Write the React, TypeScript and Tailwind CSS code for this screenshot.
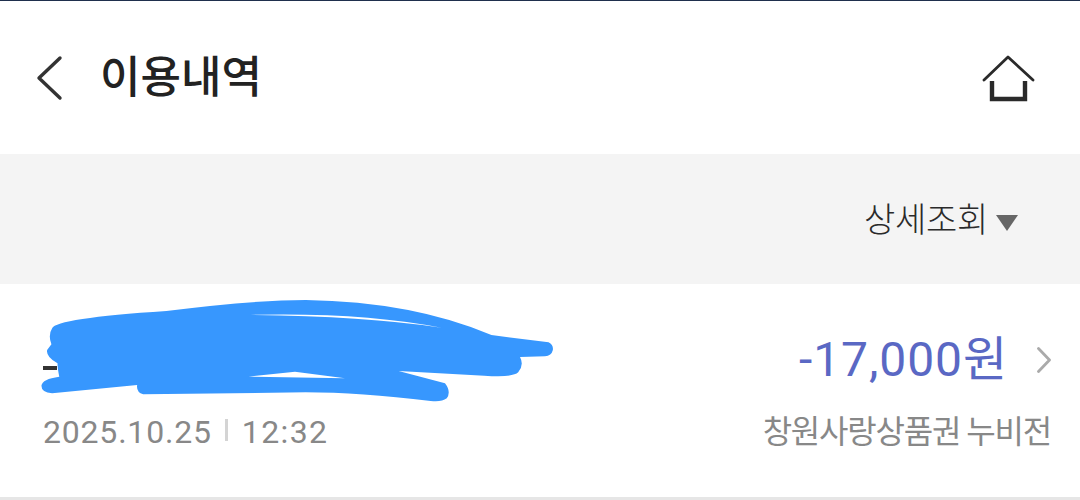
export default function App() {
  const kr = "font-['Noto_Sans_CJK_KR',sans-serif]";
  return (
    <div className={`w-[1080px] h-[500px] overflow-hidden bg-white flex flex-col ${kr}`}>
      <div className="h-px shrink-0 bg-[#1f2f4d]" />
      <header className="h-[153px] shrink-0 flex items-center justify-between pl-[36px] pr-[45px]">
        <div className="flex items-center gap-[36px]">
          <svg width="28" height="46" viewBox="0 0 28 46" fill="none" stroke="#333" strokeWidth="3.4" strokeLinecap="round" strokeLinejoin="round">
            <path d="M24 3 L3 23 L24 43" />
          </svg>
          <h1 className="text-[44px] leading-none font-medium text-[#222] mb-[7px]">이용내역</h1>
        </div>
        <svg width="54" height="48" viewBox="0 0 54 48" fill="none" stroke="#2a2a2a" strokeLinecap="round">
          <path d="M3 26 L27 3 L52 26" strokeWidth="2.8" strokeLinejoin="round" />
          <path d="M11 27 V45 H44 V27" strokeWidth="4.4" strokeLinecap="butt" />
        </svg>
      </header>
      <div className="h-[130px] shrink-0 bg-[#f4f4f4] flex items-center justify-end pr-[62px] gap-[8px]">
        <span className="text-[34px] leading-none text-[#2a2a2a] tracking-[-0.3px] font-light mb-[2px]">상세조회</span>
        <svg width="22" height="16" viewBox="0 0 22 16" className="mt-[8px]">
          <path d="M0 0 H22 L11 16 Z" fill="#666" />
        </svg>
      </div>
      <section className="relative h-[213px] shrink-0 flex justify-between pl-[43px] pr-[29px] pt-[50px]">
        <div className="flex flex-col justify-end pb-[49px]">
          <div className="h-[4px] w-[14px] bg-[#333] mb-[46px]" />
          <div className="flex items-center font-['Roboto',sans-serif] text-[32px] leading-none text-[#888] tracking-[0.8px]">
            <span>2025.10.25</span>
            <span className="w-[3px] h-[22px] bg-[#d4d4d4] mx-[13px] mb-[4px]" />
            <span className="tracking-[1.4px] ml-[1px]">12:32</span>
          </div>
        </div>
        <div className="flex flex-col items-end">
          <div className="flex items-center gap-[31px] mt-[2px]">
            <span className="font-['Roboto','Noto_Sans_CJK_KR',sans-serif] text-[48px] leading-none text-[#5a68c4] tracking-[0.9px] mr-[-2px]">-17,000원</span>
            <svg width="14" height="26" viewBox="0 0 14 26" fill="none" stroke="#aaa" strokeWidth="2.8" strokeLinecap="round" strokeLinejoin="round">
              <path d="M1.5 1.5 L12.5 13 L1.5 24.5" />
            </svg>
          </div>
          <span className="mt-[29px] text-[32px] leading-none text-[#888] tracking-[-1.2px]">창원사랑상품권 누비전</span>
        </div>
        <svg className="absolute left-[20px] top-px" width="560" height="215" viewBox="0 0 1568 645" preserveAspectRatio="none">
          <path
            fillRule="evenodd"
            fill="#3797fe"
            d="M90 130 Q100 100 410 78 Q650 45 800 45 Q1100 50 1320 150 L1480 172 Q1494 180 1492 195 Q1488 213 1470 214 L1400 216 Q1412 240 1395 262 Q1380 278 1300 272 L1060 258 L1190 295 Q1208 320 1195 340 Q1180 352 1150 348 Q950 322 800 322 L345 328 Q325 322 328 300 L90 325 Q60 322 60 302 Q62 282 110 275 Q105 250 105 235 Q72 215 76 195 L88 178 Q78 150 90 130 Z M630 90 Q950 80 1180 128 Q950 92 630 90 Z M640 275 L770 260 L910 280 Z"
          />
        </svg>
      </section>
      <div className="flex-1 bg-[#e6e6e6]" />
    </div>
  );
}
